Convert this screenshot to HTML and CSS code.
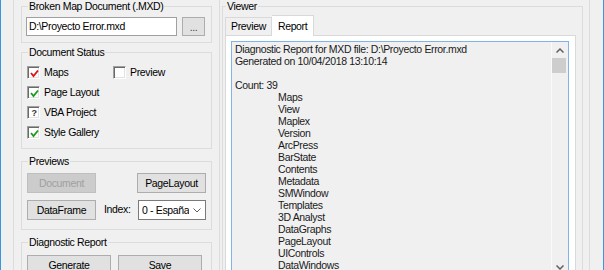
FILE: index.html
```html
<!DOCTYPE html>
<html lang="en">
<head>
    <meta charset="UTF-8">
    <meta name="viewport" content="width=device-width, initial-scale=1.0">
    <title>MXD Doctor</title>
    <link rel="stylesheet" href="styles.css">
</head>
<body>

    <div class="window">
        <div class="split">

            <!-- Left pane: document and actions -->
            <div class="pane pane-left">

                <fieldset class="group group-mxd">
                    <legend>Broken Map Document (.MXD)</legend>
                    <div class="file-row">
                        <div class="textbox">D:\Proyecto Error.mxd</div>
                        <button class="btn btn-browse">...</button>
                    </div>
                </fieldset>

                <fieldset class="group group-status">
                    <legend>Document Status</legend>
                    <div class="checks">
                        <div class="check-row">
                            <div class="check check-wide">
                                <span class="box">
                                    <svg width="9" height="9" viewBox="0 0 9 9"><polyline points="1,4 3.5,7 8,1.5" fill="none" stroke="#e01010" stroke-width="1.8"/></svg>
                                </span>
                                Maps
                            </div>
                            <div class="check">
                                <span class="box"></span>
                                Preview
                            </div>
                        </div>
                        <div class="check-row">
                            <div class="check">
                                <span class="box">
                                    <svg width="9" height="9" viewBox="0 0 9 9"><polyline points="1,4 3.5,7 8,1.5" fill="none" stroke="#1a9a1a" stroke-width="1.8"/></svg>
                                </span>
                                Page Layout
                            </div>
                        </div>
                        <div class="check-row">
                            <div class="check">
                                <span class="box box-unknown">?</span>
                                VBA Project
                            </div>
                        </div>
                        <div class="check-row">
                            <div class="check">
                                <span class="box">
                                    <svg width="9" height="9" viewBox="0 0 9 9"><polyline points="1,4 3.5,7 8,1.5" fill="none" stroke="#1a9a1a" stroke-width="1.8"/></svg>
                                </span>
                                Style Gallery
                            </div>
                        </div>
                    </div>
                </fieldset>

                <fieldset class="group group-previews">
                    <legend>Previews</legend>
                    <div class="btn-row">
                        <button class="btn btn-preview" disabled>Document</button>
                        <button class="btn btn-preview push-right">PageLayout</button>
                    </div>
                    <div class="btn-row">
                        <button class="btn btn-preview">DataFrame</button>
                        <span class="field-label">Index:</span>
                        <div class="combo push-right">
                            <span class="combo-value">0 - España</span>
                            <svg width="8" height="5" viewBox="0 0 8 5"><polyline points="0.5,0.5 4,4 7.5,0.5" fill="none" stroke="#606060" stroke-width="1"/></svg>
                        </div>
                    </div>
                </fieldset>

                <fieldset class="group group-report">
                    <legend>Diagnostic Report</legend>
                    <div class="btn-row">
                        <button class="btn btn-action">Generate</button>
                        <button class="btn btn-action">Save</button>
                    </div>
                </fieldset>
            </div>

            <!-- Right pane: viewer with tabs -->
            <div class="pane pane-right">
                <fieldset class="group group-viewer">
                    <legend>Viewer</legend>
                    <div class="tabs">
                        <div class="tab">Preview</div>
                        <div class="tab tab-active">Report</div>
                    </div>
                    <div class="tab-page">
                        <div class="report">
                            <div class="report-text">
                                <div>Diagnostic Report for MXD file: D:\Proyecto Error.mxd</div>
                                <div>Generated on 10/04/2018 13:10:14</div>
                                <div>&nbsp;</div>
                                <div>Count: 39</div>
                                <div class="item">Maps</div>
                                <div class="item">View</div>
                                <div class="item">Maplex</div>
                                <div class="item">Version</div>
                                <div class="item">ArcPress</div>
                                <div class="item">BarState</div>
                                <div class="item">Contents</div>
                                <div class="item">Metadata</div>
                                <div class="item">SMWindow</div>
                                <div class="item">Templates</div>
                                <div class="item">3D Analyst</div>
                                <div class="item">DataGraphs</div>
                                <div class="item">PageLayout</div>
                                <div class="item">UIControls</div>
                                <div class="item">DataWindows</div>
                            </div>
                            <div class="scrollbar">
                                <div class="scroll-btn">
                                    <svg width="8" height="5" viewBox="0 0 8 5"><polyline points="0.5,4.5 4,1 7.5,4.5" fill="none" stroke="#606060" stroke-width="1.5"/></svg>
                                </div>
                                <div class="scroll-thumb"></div>
                                <div class="scroll-track"></div>
                                <div class="scroll-btn">
                                    <svg width="8" height="5" viewBox="0 0 8 5"><polyline points="0.5,0.5 4,4 7.5,0.5" fill="none" stroke="#606060" stroke-width="1.5"/></svg>
                                </div>
                            </div>
                        </div>
                    </div>
                </fieldset>
            </div>

        </div>
    </div>

</body>
</html>
```

FILE: styles.css
```css
* {
    box-sizing: border-box;
}

html, body {
    margin: 0;
}

body {
    width: 604px;
    height: 270px;
    overflow: hidden;
    background-color: #f0f0f0;
    font-family: 'Liberation Sans', Arial, sans-serif;
    font-size: 10.5px;
    letter-spacing: -0.35px;
    line-height: 13px;
    color: #000000;
}

/* Window frame, blue edges on both sides */
.window {
    height: 270px;
    border-left: 1px solid #3a96dd;
    border-right: 1px solid #3a96dd;
    padding: 0 13px 0 12px;
}

.split {
    display: flex;
    height: 270px;
    border-left: 1px solid #dcdcdc;
    border-right: 1px solid #dcdcdc;
}

.pane-left {
    width: 206px;
    flex-shrink: 0;
    border-right: 1px solid #dcdcdc;
}

.pane-right {
    flex: 1;
}

/* Group boxes */
.group {
    margin: 0;
    padding: 0;
    min-width: 0;
    border: 1px solid #dcdcdc;
}

.group legend {
    padding: 0 1px;
    margin-left: 6px;
    line-height: 13px;
}

.pane-left .group {
    margin-left: 7px;
    width: 191px;
}

.group-mxd {
    height: 43px;
}

.group-status {
    margin-top: 3px;
    height: 103px;
}

.group-previews {
    margin-top: 6px;
    height: 75px;
}

.group-report {
    margin-top: 6px;
    height: 60px;
}

.file-row {
    display: flex;
    margin-top: 4px;
    padding-left: 4px;
}

.textbox {
    width: 151px;
    height: 19px;
    background-color: #ffffff;
    border: 1px solid #a0a0a0;
    padding: 0 2px;
    line-height: 17px;
}

.btn {
    font-family: inherit;
    font-size: inherit;
    letter-spacing: inherit;
    color: #000000;
    background-color: #e1e1e1;
    border: 1px solid #adadad;
    border-radius: 0;
    padding: 0;
    margin: 0;
}

.btn:disabled {
    background-color: #cccccc;
    border-color: #bfbfbf;
    color: #a0a0a0;
}

.btn-browse {
    width: 23px;
    height: 19px;
    margin-left: 5px;
    color: #444444;
}

/* Checkboxes */
.checks {
    display: flex;
    flex-direction: column;
    gap: 7px;
    margin-top: 7px;
    padding-left: 5px;
}

.check-row {
    display: flex;
    height: 13px;
}

.check {
    display: flex;
    align-items: center;
    gap: 4px;
}

.check-wide {
    width: 86px;
}

.box {
    width: 13px;
    height: 13px;
    display: flex;
    align-items: center;
    justify-content: center;
    background-color: #ffffff;
    border: 1px solid;
    border-color: #a0a0a0 #ffffff #ffffff #a0a0a0;
    box-shadow: inset 1px 1px 0 #696969, inset -1px -1px 0 #e3e3e3;
}

.box svg {
    margin: 1px 0 0 1px;
}

.box-unknown {
    font-size: 9px;
    font-weight: bold;
    color: #333333;
    line-height: 9px;
    padding: 1px 0 0 1px;
}

/* Preview and report buttons */
.btn-row {
    display: flex;
    align-items: center;
    margin-top: 5px;
    padding: 0 5px 0 5px;
}

.btn-row + .btn-row {
    margin-top: 6px;
}

.btn-preview {
    width: 69px;
    height: 20px;
}

.push-right {
    margin-left: auto;
}

.field-label {
    margin-left: 8px;
}

.combo {
    width: 68px;
    height: 20px;
    margin-top: 1px;
    display: flex;
    align-items: center;
    justify-content: space-between;
    background-color: #ffffff;
    border: 1px solid #7a7a7a;
    padding: 0 4px 0 3px;
}

.combo-value {
    white-space: nowrap;
    overflow: hidden;
}

.group-report .btn-row {
    margin-top: 6px;
    gap: 7px;
}

.btn-action {
    width: 84px;
    height: 20px;
}

/* Viewer */
.group-viewer {
    margin-left: 2px;
    margin-right: 6px;
    height: 290px;
}

.group-viewer legend {
    margin-left: 3px;
}

.tabs {
    display: flex;
    align-items: flex-end;
    height: 21px;
    margin: 1px 0 0 2px;
}

.tab {
    height: 18px;
    padding: 0 5px;
    line-height: 16px;
    border: 1px solid #d9d9d9;
    border-bottom: none;
    background-color: #f0f0f0;
}

.tab-active {
    height: 21px;
    padding: 0 6px;
    line-height: 20px;
    background-color: #ffffff;
    border-left: none;
    margin-bottom: -1px;
    position: relative;
}

.tab-page {
    margin: 0 6px 0 2px;
    height: 260px;
    background-color: #ffffff;
    border: 1px solid #d9d9d9;
    padding: 5px 6px 0 5px;
}

.report {
    display: flex;
    height: 235px;
    background-color: #f0f0f0;
    border: 1px solid #7eb4ea;
}

.report-text {
    flex: 1;
    padding: 1px 0 0 3px;
    line-height: 12px;
    color: #1a1a1a;
    white-space: nowrap;
    overflow: hidden;
}

.report-text .item {
    padding-left: 43px;
}

.scrollbar {
    width: 17px;
    display: flex;
    flex-direction: column;
    border-left: 1px solid #fafafa;
}

.scroll-btn {
    height: 16px;
    display: flex;
    align-items: center;
    justify-content: center;
}

.scroll-thumb {
    height: 15px;
    margin: 0 2px 0 0;
    background-color: #cdcdcd;
}

.scroll-track {
    flex: 1;
}
```
